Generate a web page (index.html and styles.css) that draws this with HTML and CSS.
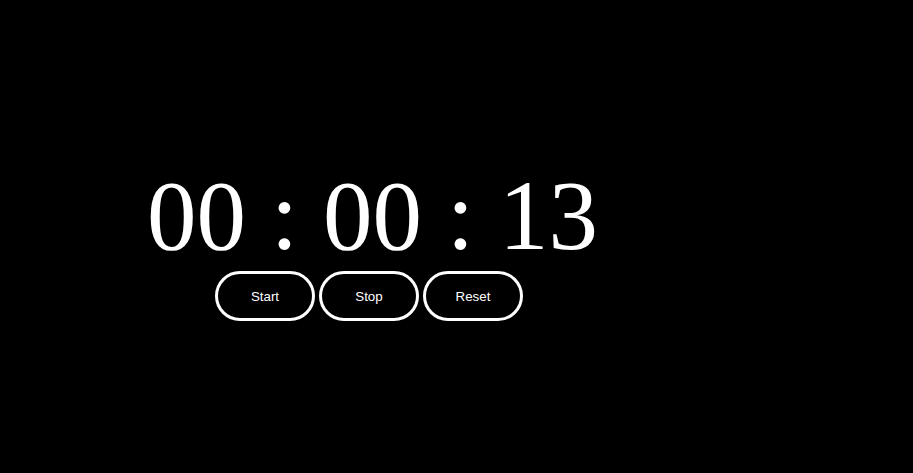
FILE: index.html
```html
<!DOCTYPE html>
<html>
<head>
<meta charset="utf-8">
<link rel="stylesheet" href="styles.css">
</head>
<body>
<main class="page">
  <section class="stopwatch">
    <div class="time">00 : 00 : 13</div>
    <div class="controls">
      <button class="btn">Start</button>
      <button class="btn">Stop</button>
      <button class="btn">Reset</button>
    </div>
  </section>
</main>
</body>
</html>
```
FILE: styles.css
```css
html, body {
  margin: 0;
  padding: 0;
  background: #000;
  height: 100%;
}
.page {
  padding-top: 161px;
  padding-left: 147px;
}
.stopwatch {
  display: inline-flex;
  flex-direction: column;
  align-items: center;
}
.time {
  font-family: "Liberation Serif", "Times New Roman", serif;
  font-size: 99px;
  line-height: 110px;
  color: #fff;
}
.controls {
  display: flex;
  gap: 4px;
  margin-right: 7px;
}
.btn {
  width: 100px;
  height: 50px;
  border: 3px solid #fff;
  border-radius: 25px;
  background: #000;
  color: #fff;
  font-family: "Liberation Sans", Arial, sans-serif;
  font-size: 13.33px;
  padding: 0;
}
```
